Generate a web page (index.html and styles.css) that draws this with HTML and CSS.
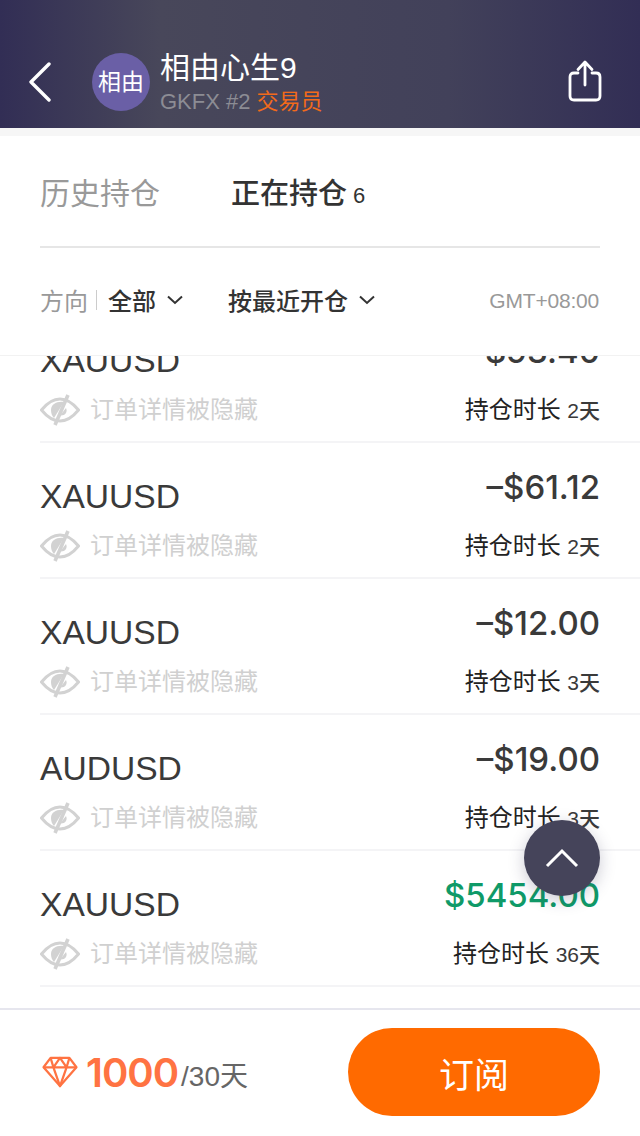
FILE: index.html
```html
<!DOCTYPE html>
<html lang="zh-CN">
<head>
    <meta charset="UTF-8">
    <meta name="viewport" content="width=device-width, initial-scale=1.0">
    <title>相由心生9</title>
    <link rel="stylesheet" href="styles.css">
</head>
<body>
    <div class="page">
        <header class="topbar">
            <svg class="back" width="24" height="40" viewBox="0 0 24 40"><path d="M21 2 L3 20 L21 38" fill="none" stroke="#fff" stroke-width="3.4" stroke-linecap="round" stroke-linejoin="round"/></svg>
            <div class="avatar">相由</div>
            <div class="who">
                <div class="name">相由心生9</div>
                <div class="sub">GKFX #2 <span class="role">交易员</span></div>
            </div>
            <svg class="share" width="34" height="42" viewBox="0 0 34 42"><path d="M10 13 H6 Q2 13 2 17 V36 Q2 40 6 40 H28 Q32 40 32 36 V17 Q32 13 28 13 H24" fill="none" stroke="#fff" stroke-width="2.8" stroke-linecap="round"/><path d="M17 25 V3 M10 9.500 L17 2 L24 9.500" fill="none" stroke="#fff" stroke-width="2.800" stroke-linecap="round" stroke-linejoin="round"/></svg>
        </header>
        <div class="band"></div>

        <nav class="tabs">
            <span class="tab">历史持仓</span>
            <span class="tab active">正在持仓<sup class="count">6</sup></span>
        </nav>

        <div class="filters">
            <span class="label">方向</span>
            <span class="pipe"></span>
            <span class="pick">全部</span>
            <svg class="caret" width="18" height="10" viewBox="0 0 18 10"><path d="M2 1.5 L9 8 L16 1.5" fill="none" stroke="#333" stroke-width="2"/></svg>
            <span class="pick sort">按最近开仓</span>
            <svg class="caret" width="18" height="10" viewBox="0 0 18 10"><path d="M2 1.5 L9 8 L16 1.5" fill="none" stroke="#333" stroke-width="2"/></svg>
            <span class="zone">GMT+08:00</span>
        </div>

        <div class="list">
            <div class="rows">
                <div class="row">
                    <div class="cell-left"><div class="symbol">XAUUSD</div><div class="hidden-note"><svg class="eye" width="40" height="32"><use href="#eye"/></svg>订单详情被隐藏</div></div>
                    <div class="cell-right"><div class="amount">$93.40</div><div class="held">持仓时长 <b>2天</b></div></div>
                </div>
                <div class="row">
                    <div class="cell-left"><div class="symbol">XAUUSD</div><div class="hidden-note"><svg class="eye" width="40" height="32"><use href="#eye"/></svg>订单详情被隐藏</div></div>
                    <div class="cell-right"><div class="amount">–$61.12</div><div class="held">持仓时长 <b>2天</b></div></div>
                </div>
                <div class="row">
                    <div class="cell-left"><div class="symbol">XAUUSD</div><div class="hidden-note"><svg class="eye" width="40" height="32"><use href="#eye"/></svg>订单详情被隐藏</div></div>
                    <div class="cell-right"><div class="amount">–$12.00</div><div class="held">持仓时长 <b>3天</b></div></div>
                </div>
                <div class="row">
                    <div class="cell-left"><div class="symbol">AUDUSD</div><div class="hidden-note"><svg class="eye" width="40" height="32"><use href="#eye"/></svg>订单详情被隐藏</div></div>
                    <div class="cell-right"><div class="amount">–$19.00</div><div class="held">持仓时长 <b>3天</b></div></div>
                </div>
                <div class="row">
                    <div class="cell-left"><div class="symbol">XAUUSD</div><div class="hidden-note"><svg class="eye" width="40" height="32"><use href="#eye"/></svg>订单详情被隐藏</div></div>
                    <div class="cell-right"><div class="amount gain">$5454.00</div><div class="held">持仓时长 <b>36天</b></div></div>
                </div>
            </div>
            <div class="to-top">
                <svg width="36" height="22" viewBox="0 0 36 22"><path d="M3 19 L18 4 L33 19" fill="none" stroke="#fff" stroke-width="3"/></svg>
            </div>
        </div>

        <footer class="footer">
            <svg class="gem" width="36" height="32" viewBox="0 0 38 34"><g fill="none" stroke="#ff7342" stroke-width="2.4" stroke-linejoin="round"><path d="M9 2 H29 L36.500 12 L19 32 L1.500 12 Z"/><path d="M1.500 12 H36.500 M12 12 L19 32 L26 12 M9 2 L12 12 L19 2 L26 12 L29 2"/></g></svg>
            <span class="price">1000</span><span class="period">/30天</span>
            <button class="subscribe">订阅</button>
        </footer>
    </div>

    <svg class="defs" width="0" height="0">
        <symbol id="eye" viewBox="0 0 40 32">
            <path d="M1.500 16 C8 8 15 5 20 5 C25 5 32 8 38.500 16 C32 24 25 27 20 27 C15 27 8 24 1.500 16 Z" fill="none" stroke="#d2d2d2" stroke-width="3"/>
            <path d="M11 16 C11 10 17 7 24 8 L14 24 C12 22 11 19 11 16 Z" fill="#d2d2d2"/>
            <path d="M28 1 L15 31" fill="none" stroke="#d2d2d2" stroke-width="3.600"/>
            <path d="M20 21.500 L26 14 C28 18 25 22 20 21.500 Z" fill="#d2d2d2"/>
        </symbol>
    </svg>
</body>
</html>
```

FILE: styles.css
```css
* {
    box-sizing: border-box;
}
body {
    margin: 0;
    background: #fff;
    font-family: "Liberation Sans", "Noto Sans CJK SC", sans-serif;
}
.page {
    width: 640px;
    height: 1136px;
    display: flex;
    flex-direction: column;
    overflow: hidden;
}
.defs {
    position: absolute;
}

/* header */
.topbar {
    height: 128px;
    flex: none;
    display: flex;
    align-items: flex-end;
    padding: 0 38px 13px 28px;
    background: linear-gradient(90deg, #322e55 0%, #48475a 25%, #42415a 70%, #322e55 100%);
}
.back {
    margin-bottom: 13px;
}
.avatar {
    width: 58px;
    height: 58px;
    margin-left: 40px;
    margin-bottom: 4px;
    border-radius: 50%;
    background: #6a5fa6;
    color: #fff;
    font-size: 23px;
    line-height: 58px;
    text-align: center;
}
.who {
    margin-left: 10px;
    flex: 1;
}
.name {
    margin-bottom: 2px;
    color: #fff;
    font-size: 30px;
    line-height: 38px;
}
.sub {
    color: #8c8c94;
    font-size: 22px;
    line-height: 26px;
}
.role {
    color: #f26a1b;
}
.share {
    margin-bottom: 13px;
}
.band {
    height: 8px;
    flex: none;
    background: #f6f6f6;
}

/* tabs */
.tabs {
    height: 112px;
    flex: none;
    margin: 0 40px;
    display: flex;
    gap: 71px;
    align-items: center;
    border-bottom: 2px solid #e6e6e6;
    padding-top: 6px;
}
.tab {
    color: #999;
    font-size: 30px;
    line-height: 40px;
}
.tab.active {
    color: #333;
    font-size: 29px;
    font-weight: 500;
}
.count {
    font-size: 22px;
    font-weight: 400;
    line-height: 0;
    margin-left: 6px;
    vertical-align: 1px;
}

/* filters */
.filters {
    height: 107px;
    flex: none;
    margin: 0 40px;
    display: flex;
    align-items: center;
    padding-bottom: 4px;
}
.label {
    color: #999;
    font-size: 24px;
}
.pipe {
    width: 1px;
    height: 20px;
    margin: 0 11px 0 8px;
    background: #ccc;
}
.pick {
    color: #333;
    font-size: 24px;
    font-weight: 500;
}
.caret {
    margin-left: 10px;
}
.sort {
    margin-left: 44px;
}
.zone {
    margin: 2px 1px 0 auto;
    color: #999;
    font-size: 21px;
    letter-spacing: -0.2px;
}

/* list */
.list {
    flex: 1;
    position: relative;
    overflow: hidden;
    border-top: 1px solid #f2f2f2;
}
.rows {
    margin-top: -49px;
    padding-left: 40px;
}
.row {
    height: 136px;
    display: flex;
    justify-content: space-between;
    padding-right: 40px;
    border-bottom: 2px solid #f4f4f6;
}
.cell-left {
    padding-top: 31px;
}
.symbol {
    color: #3a3a3a;
    font-size: 33.6px;
    line-height: 46px;
}
.hidden-note {
    display: flex;
    align-items: center;
    gap: 10px;
    margin-top: 7px;
    color: #d0d0d0;
    font-size: 24px;
    line-height: 38px;
}
.cell-right {
    padding-top: 21px;
    text-align: right;
}
.amount {
    color: #3a3a3a;
    font-family: Inter, "Liberation Sans", sans-serif;
    font-size: 33px;
    font-weight: 500;
    line-height: 46px;
}
.amount.gain {
    color: #0f9a68;
}
.held {
    margin-top: 19px;
    color: #222;
    font-size: 24px;
    line-height: 34px;
}
.held b {
    color: #3a3a3a;
    font-size: 21px;
    font-weight: 500;
}
.to-top {
    position: absolute;
    right: 40px;
    top: 464px;
    width: 76px;
    height: 76px;
    display: flex;
    align-items: center;
    justify-content: center;
    border-radius: 50%;
    background: #45445a;
    box-shadow: 0 4px 16px rgba(50, 46, 85, 0.25);
}

/* footer */
.footer {
    height: 128px;
    flex: none;
    display: flex;
    align-items: center;
    padding: 0 40px 2px 42px;
    border-top: 2px solid #e6e6ee;
}
.gem {
    margin-right: 8px;
}
.price {
    color: #ff7342;
    font-family: Inter, "Liberation Sans", sans-serif;
    font-size: 40px;
    font-weight: 600;
    letter-spacing: -1px;
}
.period {
    margin: 4px 0 0 3px;
    color: #666;
    font-size: 28px;
}
.subscribe {
    margin-left: auto;
    width: 252px;
    height: 88px;
    border: none;
    border-radius: 44px;
    background: #ff6a00;
    color: #fff;
    font-family: inherit;
    font-size: 35px;
}
```
